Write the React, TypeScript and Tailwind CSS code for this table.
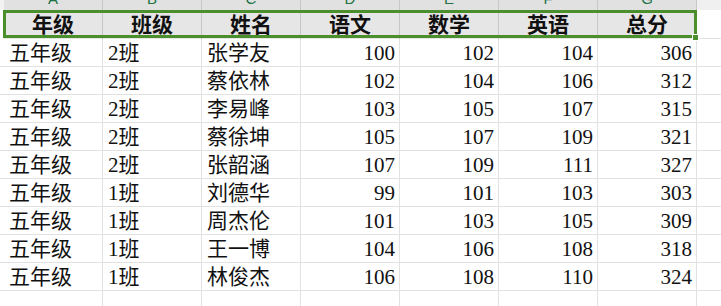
import React from 'react';

const columns = ['A', 'B', 'C', 'D', 'E', 'F', 'G'];
const headers = ['年级', '班级', '姓名', '语文', '数学', '英语', '总分'];

const rows: [string, string, string, number, number, number, number][] = [
  ['五年级', '2班', '张学友', 100, 102, 104, 306],
  ['五年级', '2班', '蔡依林', 102, 104, 106, 312],
  ['五年级', '2班', '李易峰', 103, 105, 107, 315],
  ['五年级', '2班', '蔡徐坤', 105, 107, 109, 321],
  ['五年级', '2班', '张韶涵', 107, 109, 111, 327],
  ['五年级', '1班', '刘德华', 99, 101, 103, 303],
  ['五年级', '1班', '周杰伦', 101, 103, 105, 309],
  ['五年级', '1班', '王一博', 104, 106, 108, 318],
  ['五年级', '1班', '林俊杰', 106, 108, 110, 324],
];

const font = { fontFamily: '"Liberation Serif", "Noto Sans CJK SC", serif' };

const App: React.FC = () => {
  return (
    <div
      className="relative w-[721px] h-[306px] overflow-hidden bg-white text-[#111]"
      style={font}
    >
      {/* column letters strip, mostly cut off */}
      <div className="flex h-[10px] overflow-hidden">
        <div className="w-[4px] shrink-0 bg-[#f2f2f2]" />
        {columns.map((c) => (
          <div
            key={c}
            className="flex w-[99px] shrink-0 items-end justify-center overflow-hidden border-r border-[#c8c8c8] bg-[#e1e1e1]"
          >
            <span
              className="mb-[4px] text-[15px] leading-[15px] text-[#217346]"
              style={{ fontFamily: '"Liberation Sans", sans-serif' }}
            >
              {c}
            </span>
          </div>
        ))}
        <div className="flex-1 bg-[#f0f0f0]" />
      </div>

      {/* header row */}
      <div className="flex h-[29px]">
        <div className="w-[4px] shrink-0" />
        {headers.map((h) => (
          <div
            key={h}
            className="flex w-[99px] shrink-0 items-end justify-center border-r border-[#c6c6c6] bg-[#e7e6e6] pb-[3px] text-[21px] font-bold leading-[21px]"
          >
            {h}
          </div>
        ))}
        <div className="flex-1 border-b border-[#e1e1e1]" />
      </div>

      {/* data rows */}
      {rows.map((r, i) => (
        <div key={i} className="flex h-[28px] border-b border-[#e1e1e1]">
          <div className="w-[4px] shrink-0" />
          {r.map((v, j) => (
            <div
              key={j}
              className={`flex w-[99px] shrink-0 items-end border-r border-[#e1e1e1] pb-[2px] text-[21px] leading-[21px] ${
                typeof v === 'number' ? 'justify-end pr-[4px]' : 'justify-start pl-[5px]'
              }`}
            >
              {v}
            </div>
          ))}
          <div className="flex-1" />
        </div>
      ))}

      {/* empty partial row */}
      <div className="flex h-[28px]">
        <div className="w-[4px] shrink-0" />
        {columns.map((c) => (
          <div key={c} className="w-[99px] shrink-0 border-r border-[#e1e1e1]" />
        ))}
      </div>

      {/* selection box over the header row */}
      <div className="pointer-events-none absolute left-[3px] top-[10px] h-[28px] w-[694px] border-[3px] border-[#4a8f2c]" />
      <div className="pointer-events-none absolute left-[692px] top-[34px] h-[7px] w-[7px] border border-white bg-[#4a8f2c]" />
    </div>
  );
};

export default App;
